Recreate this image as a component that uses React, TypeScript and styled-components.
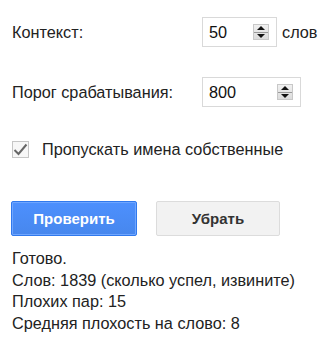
import React from "react";
import styled, { createGlobalStyle } from "styled-components";

const Global = createGlobalStyle`
  body {
    margin: 0;
    background: #fff;
    font-family: "Liberation Sans", Arial, sans-serif;
    font-size: 16.25px;
    color: #222;
  }
`;

const Page = styled.div`
  padding: 17px 12px 0 12px;
  display: flex;
  flex-direction: column;
`;

const Row = styled.div<{ $mb: number }>`
  display: flex;
  align-items: center;
  margin-bottom: ${(p) => p.$mb}px;
`;

const Label = styled.span`
  width: 190px;
`;

const NumberBox = styled.div<{ $w: number }>`
  box-sizing: border-box;
  width: ${(p) => p.$w}px;
  height: 30px;
  border: 1px solid #d9d9d9;
  display: flex;
  align-items: center;
  justify-content: space-between;
  padding: 0 7px 0 6px;
  color: #111;
`;

const Spin = styled.div`
  box-sizing: border-box;
  width: 16px;
  height: 16px;
  background: linear-gradient(#f0f0f0, #dcdcdc);
  border: 1px solid #c8c8c8;
  display: flex;
  flex-direction: column;
`;

const SpinHalf = styled.div<{ $down?: boolean }>`
  flex: 1;
  display: flex;
  align-items: center;
  justify-content: center;
  border-top: ${(p) => (p.$down ? "1px solid #9a9a9a" : "none")};
  &::after {
    content: "";
    border-left: 4px solid transparent;
    border-right: 4px solid transparent;
    ${(p) =>
      p.$down ? "border-top: 4px solid #111;" : "border-bottom: 4px solid #111;"}
  }
`;

const Unit = styled.span`
  margin-left: 5px;
`;

const CheckRow = styled.label`
  display: flex;
  align-items: center;
  gap: 13px;
  margin-bottom: 42px;
`;

const CheckBox = styled.span`
  box-sizing: border-box;
  width: 17px;
  height: 17px;
  border: 1px solid #c6c6c6;
  background: #f7f7f7;
  display: flex;
  align-items: center;
  justify-content: center;
`;

const Buttons = styled.div`
  display: flex;
  gap: 19px;
  margin-left: -1px;
  margin-bottom: 12px;
`;

const Button = styled.button<{ $primary?: boolean }>`
  box-sizing: border-box;
  width: ${(p) => (p.$primary ? 126 : 124)}px;
  height: 35px;
  border-radius: 2px;
  font-family: "Liberation Sans", Arial, sans-serif;
  font-weight: bold;
  font-size: 15px;
  border: 1px solid ${(p) => (p.$primary ? "#3079ed" : "#dcdcdc")};
  background: ${(p) =>
    p.$primary ? "linear-gradient(#4d90fe, #4787ed)" : "#f2f2f2"};
  color: ${(p) => (p.$primary ? "#fff" : "#333")};
  box-shadow: ${(p) => (p.$primary ? "inset 0 0 0 1px #6fa6ff" : "none")};
`;

const Status = styled.div`
  line-height: 21.5px;
`;

function NumberField({ value, width }: { value: string; width: number }) {
  return (
    <NumberBox $w={width}>
      <span>{value}</span>
      <Spin>
        <SpinHalf />
        <SpinHalf $down />
      </Spin>
    </NumberBox>
  );
}

export default function App() {
  const lines = [
    "Готово.",
    "Слов: 1839 (сколько успел, извините)",
    "Плохих пар: 15",
    "Средняя плохость на слово: 8",
  ];
  return (
    <>
      <Global />
      <Page>
        <Row $mb={30}>
          <Label>Контекст:</Label>
          <NumberField value="50" width={75} />
          <Unit>слов</Unit>
        </Row>
        <Row $mb={33}>
          <Label>Порог срабатывания:</Label>
          <NumberField value="800" width={99} />
        </Row>
        <CheckRow>
          <CheckBox>
            <svg width="15" height="13" viewBox="0 0 15 13">
              <path d="M1.5 7 L5.5 11 L13.5 1.5" fill="none" stroke="#666" strokeWidth="2" />
            </svg>
          </CheckBox>
          <span>Пропускать имена собственные</span>
        </CheckRow>
        <Buttons>
          <Button $primary>Проверить</Button>
          <Button>Убрать</Button>
        </Buttons>
        <Status>
          {lines.map((l, i) => (
            <div key={i}>{l}</div>
          ))}
        </Status>
      </Page>
    </>
  );
}
